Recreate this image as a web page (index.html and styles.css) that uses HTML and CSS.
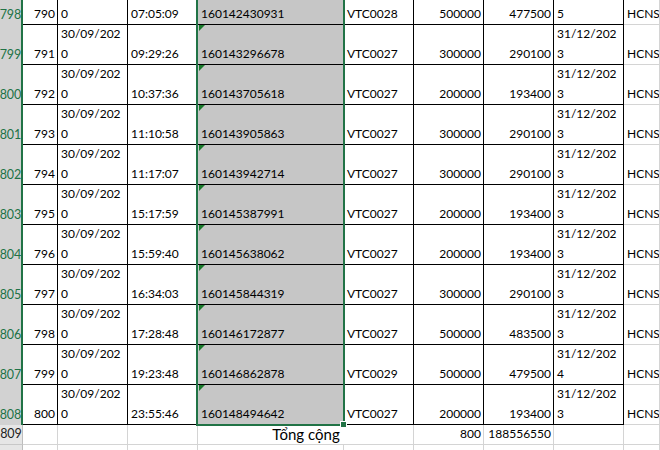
FILE: index.html
```html
<!DOCTYPE html>
<html>
<head>
<meta charset="utf-8">
<link rel="stylesheet" href="styles.css">
</head>
<body>
<div class="stack">
  <div class="sheet">
    <div class="h">798</div><div class="c r">790</div><div class="c">30/09/202<br>0</div><div class="c">07:05:09</div><div class="c d">160142430931</div><div class="c">VTC0028</div><div class="c r">500000</div><div class="c r">477500</div><div class="c">31/12/202<br>5</div><div class="c i">HCNS</div>
    <div class="h">799</div><div class="c r">791</div><div class="c">30/09/202<br>0</div><div class="c">09:29:26</div><div class="c d">160143296678</div><div class="c">VTC0027</div><div class="c r">300000</div><div class="c r">290100</div><div class="c">31/12/202<br>3</div><div class="c i">HCNS</div>
    <div class="h">800</div><div class="c r">792</div><div class="c">30/09/202<br>0</div><div class="c">10:37:36</div><div class="c d">160143705618</div><div class="c">VTC0027</div><div class="c r">200000</div><div class="c r">193400</div><div class="c">31/12/202<br>3</div><div class="c i">HCNS</div>
    <div class="h">801</div><div class="c r">793</div><div class="c">30/09/202<br>0</div><div class="c">11:10:58</div><div class="c d">160143905863</div><div class="c">VTC0027</div><div class="c r">300000</div><div class="c r">290100</div><div class="c">31/12/202<br>3</div><div class="c i">HCNS</div>
    <div class="h">802</div><div class="c r">794</div><div class="c">30/09/202<br>0</div><div class="c">11:17:07</div><div class="c d">160143942714</div><div class="c">VTC0027</div><div class="c r">300000</div><div class="c r">290100</div><div class="c">31/12/202<br>3</div><div class="c i">HCNS</div>
    <div class="h">803</div><div class="c r">795</div><div class="c">30/09/202<br>0</div><div class="c">15:17:59</div><div class="c d">160145387991</div><div class="c">VTC0027</div><div class="c r">200000</div><div class="c r">193400</div><div class="c">31/12/202<br>3</div><div class="c i">HCNS</div>
    <div class="h">804</div><div class="c r">796</div><div class="c">30/09/202<br>0</div><div class="c">15:59:40</div><div class="c d">160145638062</div><div class="c">VTC0027</div><div class="c r">200000</div><div class="c r">193400</div><div class="c">31/12/202<br>3</div><div class="c i">HCNS</div>
    <div class="h">805</div><div class="c r">797</div><div class="c">30/09/202<br>0</div><div class="c">16:34:03</div><div class="c d">160145844319</div><div class="c">VTC0027</div><div class="c r">300000</div><div class="c r">290100</div><div class="c">31/12/202<br>3</div><div class="c i">HCNS</div>
    <div class="h">806</div><div class="c r">798</div><div class="c">30/09/202<br>0</div><div class="c">17:28:48</div><div class="c d">160146172877</div><div class="c">VTC0027</div><div class="c r">500000</div><div class="c r">483500</div><div class="c">31/12/202<br>3</div><div class="c i">HCNS</div>
    <div class="h">807</div><div class="c r">799</div><div class="c">30/09/202<br>0</div><div class="c">19:23:48</div><div class="c d">160146862878</div><div class="c">VTC0029</div><div class="c r">500000</div><div class="c r">479500</div><div class="c">31/12/202<br>4</div><div class="c i">HCNS</div>
    <div class="h">808</div><div class="c r">800</div><div class="c">30/09/202<br>0</div><div class="c">23:55:46</div><div class="c d">160148494642</div><div class="c">VTC0027</div><div class="c r">200000</div><div class="c r">193400</div><div class="c">31/12/202<br>3</div><div class="c i">HCNS</div>
    <div class="h n">809</div><div class="c g"></div><div class="c g"></div><div class="c g"></div><div class="c g m">Tổng cộng</div><div class="c g r">800</div><div class="c g r">188556550</div><div class="c g"></div><div class="c g"></div>
    <div class="h n"></div><div class="c g"></div><div class="c g"></div><div class="c g"></div><div class="c g"></div><div class="c g"></div><div class="c g"></div><div class="c g"></div><div class="c g"></div><div class="c g"></div>
  </div>
  <div class="overlay">
    <div class="selbox"><span class="handle"></span></div>
  </div>
</div>
</body>
</html>
```
FILE: styles.css
```css
html, body {
  margin: 0;
  padding: 0;
}
body {
  width: 660px;
  height: 450px;
  overflow: hidden;
  background: #fff;
  font-family: Lato, "Open Sans", sans-serif;
  font-size: 12px;
  color: #000;
}
.stack {
  display: grid;
  margin-top: -15px;
}
.stack > * {
  grid-area: 1 / 1;
}
.sheet,
.overlay {
  display: grid;
  grid-template-columns: 23px 35px 70px 70px 146px 70px 70px 70px 70px 36px;
  grid-template-rows: repeat(11, 40px) 20px 20px;
}
.overlay {
  pointer-events: none;
}
.h {
  box-sizing: border-box;
  background: #d2d2d2;
  color: #217346;
  border-right: 2px solid #217346;
  display: flex;
  align-items: flex-end;
  justify-content: center;
  line-height: 20px;
  font-size: 12.5px;
  overflow: hidden;
  white-space: nowrap;
}
.h.n {
  background: #e6e6e6;
  color: #222;
  border-right: 1px solid #bdbdbd;
  border-bottom: 1px solid #c8c8c8;
}
.c {
  box-sizing: border-box;
  border-right: 1px solid #000;
  border-bottom: 1px solid #000;
  display: flex;
  flex-direction: column;
  justify-content: flex-end;
  align-items: flex-start;
  padding: 0 2px 0 3px;
  line-height: 20px;
  white-space: nowrap;
  overflow: hidden;
}
.r {
  align-items: flex-end;
  text-align: right;
}
.d {
  background: #c6c6c6;
  position: relative;
}
.d::before {
  content: "";
  position: absolute;
  top: 0;
  left: 1px;
  border-top: 6px solid #1a7a2c;
  border-right: 6px solid transparent;
}
.i {
  border-right-color: #d4d4d4;
  border-bottom-color: #d4d4d4;
}
.g {
  border-right-color: #d4d4d4;
  border-bottom-color: #d4d4d4;
}
.m {
  grid-column: span 2;
  align-items: center;
  font-size: 15px;
}
.selbox {
  grid-column: 5;
  grid-row: 1 / 12;
  margin: 0 -1px -1px -2px;
  border: 2px solid #217346;
  border-top: none;
  position: relative;
}
.handle {
  position: absolute;
  right: -4px;
  bottom: -4px;
  width: 5px;
  height: 5px;
  background: #217346;
  border: 1px solid #fff;
}
```
